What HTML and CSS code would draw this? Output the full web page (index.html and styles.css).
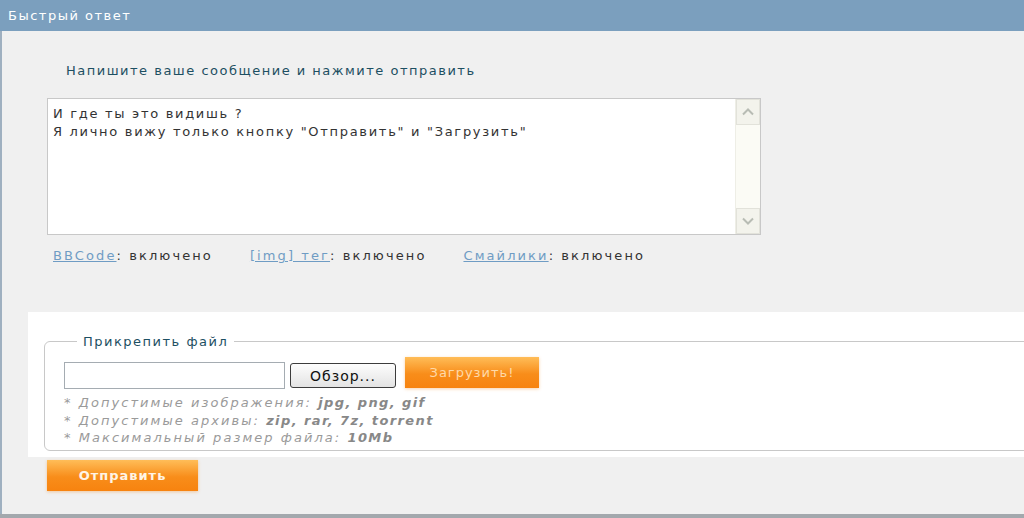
FILE: index.html
```html
<!DOCTYPE html>
<html lang="ru">
	<head>
		<meta charset="UTF-8" />
		<meta name="viewport" content="width=device-width, initial-scale=1.0" />
		<title>Быстрый ответ</title>
		<link rel="stylesheet" href="styles.css">
	</head>
	<body>
		<div id="quick-reply">
			<div class="panel-head">Быстрый ответ</div>
			<div class="panel-body">
				<p class="intro">Напишите ваше сообщение и нажмите отправить</p>
				<div class="editor">
					<div class="editor-text">И где ты это видишь ?<br>Я лично вижу только кнопку "Отправить" и "Загрузить"</div>
					<div class="scrollbar">
						<div class="scroll-btn">
							<svg width="12" height="8" viewBox="0 0 12 8"><path d="M1 6.5 L6 1.5 L11 6.5" fill="none" stroke="#b8bcb4" stroke-width="2"/></svg>
						</div>
						<div class="scroll-track"></div>
						<div class="scroll-btn">
							<svg width="12" height="8" viewBox="0 0 12 8"><path d="M1 1.5 L6 6.5 L11 1.5" fill="none" stroke="#b8bcb4" stroke-width="2"/></svg>
						</div>
					</div>
				</div>
				<div class="options">
					<span class="option"><a href="#" class="link">BBCode</a>: включено</span>
					<span class="option"><a href="#" class="link">[img] тег</a>: включено</span>
					<span class="option"><a href="#" class="link">Смайлики</a>: включено</span>
				</div>
				<div class="attach-wrap">
					<fieldset class="attach">
						<legend class="attach-title">Прикрепить файл</legend>
						<div class="file-row">
							<input type="text" class="file-input" />
							<button type="button" class="browse-btn">Обзор...</button>
							<button type="button" class="upload-btn">Загрузить!</button>
						</div>
						<p class="hint">* Допустимые изображения: <b>jpg, png, gif</b></p>
						<p class="hint">* Допустимые архивы: <b>zip, rar, 7z, torrent</b></p>
						<p class="hint">* Максимальный размер файла: <b>10Mb</b></p>
					</fieldset>
				</div>
				<button type="submit" class="send-btn">Отправить</button>
			</div>
		</div>
	</body>
</html>
```

FILE: styles.css
```css
:root {
	--head-bg-color: #7b9fbe;
	--body-bg-color: #f0f0f0;
	--title-color: #1d4f62;
	--text-color: #333;
	--link-color: #6f9cc4;
	--border-color: #c8c8c8;
	--hint-color: #9a9a9a;
}
body {
	margin: 0;
	padding: 0;
	font-family: "DejaVu Sans", Verdana, sans-serif;
	font-size: 13px;
	letter-spacing: 1.5px;
	background-color: var(--body-bg-color);
}
#quick-reply {
	height: 518px;
	box-sizing: border-box;
	border-bottom: 4px solid #a3a8ad;
}
.panel-head {
	height: 31px;
	line-height: 32px;
	padding-left: 8px;
	background-color: var(--head-bg-color);
	color: #fff;
}
.panel-body {
	border-left: 2px solid #9fb0c0;
	height: 483px;
	box-sizing: border-box;
	padding-top: 30px;
}
.intro {
	margin: 0 0 17px 64px;
	color: var(--title-color);
	line-height: 20px;
}
.editor {
	display: flex;
	width: 714px;
	height: 137px;
	margin-left: 45px;
	box-sizing: border-box;
	border: 1px solid var(--border-color);
	background-color: #fff;
}
.editor-text {
	flex: 1;
	padding: 6px 5px;
	color: var(--text-color);
	letter-spacing: 1.7px;
	line-height: 18px;
}
.scrollbar {
	display: flex;
	flex-direction: column;
	width: 24px;
	background-color: #fbfbf5;
	border-left: 1px solid #eeeee6;
}
.scroll-btn {
	height: 24px;
	display: flex;
	align-items: center;
	justify-content: center;
	background-color: #f3f3ec;
	border: 1px solid #e2e2da;
}
.scroll-track {
	flex: 1;
}
.options {
	display: flex;
	gap: 37px;
	margin: 11px 0 0 51px;
	color: var(--text-color);
	letter-spacing: 2.1px;
	line-height: 20px;
}
.link {
	color: var(--link-color);
}
.attach-wrap {
	margin: 46px 0 0 26px;
	padding: 22px 0 6px 16px;
	background-color: #fff;
}
.attach {
	margin: 0 -20px 0 0;
	padding: 13px 0 3px 19px;
	border: 1px solid var(--border-color);
	border-radius: 6px;
}
.attach-title {
	margin-left: 13px;
	padding: 0 6px;
	color: var(--title-color);
}
.file-row {
	display: flex;
	align-items: center;
	gap: 5px;
	margin-bottom: 5px;
}
.file-input {
	width: 221px;
	height: 27px;
	box-sizing: border-box;
	border: 1px solid #a5acb2;
	border-radius: 0;
}
.browse-btn {
	width: 106px;
	height: 25px;
	font-family: "DejaVu Sans", Verdana, sans-serif;
	font-size: 14px;
	letter-spacing: 1px;
	color: #111;
	background: linear-gradient(#fdfdfd, #e3e3e3);
	border: 1px solid #3c3c3c;
	border-radius: 3px;
	padding: 0;
}
.upload-btn {
	width: 134px;
	height: 31px;
	margin: -6px 0 0 4px;
	border: none;
	background: linear-gradient(#ffbd58, #f88d1a 55%, #f7830f);
	box-shadow: 0 1px 3px rgba(240, 140, 40, 0.4);
	color: #ffd9a8;
	font-family: "DejaVu Sans", Verdana, sans-serif;
	font-size: 13px;
	letter-spacing: 1px;
}
.hint {
	margin: 0;
	color: var(--hint-color);
	font-style: italic;
	letter-spacing: 2.05px;
	line-height: 17.5px;
}
.hint b {
	color: #888;
	letter-spacing: 1.4px;
}
.send-btn {
	display: block;
	width: 151px;
	height: 31px;
	margin: 3px 0 0 45px;
	border: none;
	background: linear-gradient(#ffbd58, #f88d1a 55%, #f7830f);
	box-shadow: 0 1px 3px rgba(240, 140, 40, 0.4);
	color: #fff4e6;
	font-family: "DejaVu Sans", Verdana, sans-serif;
	font-weight: bold;
	font-size: 13px;
	letter-spacing: 1px;
}
```
